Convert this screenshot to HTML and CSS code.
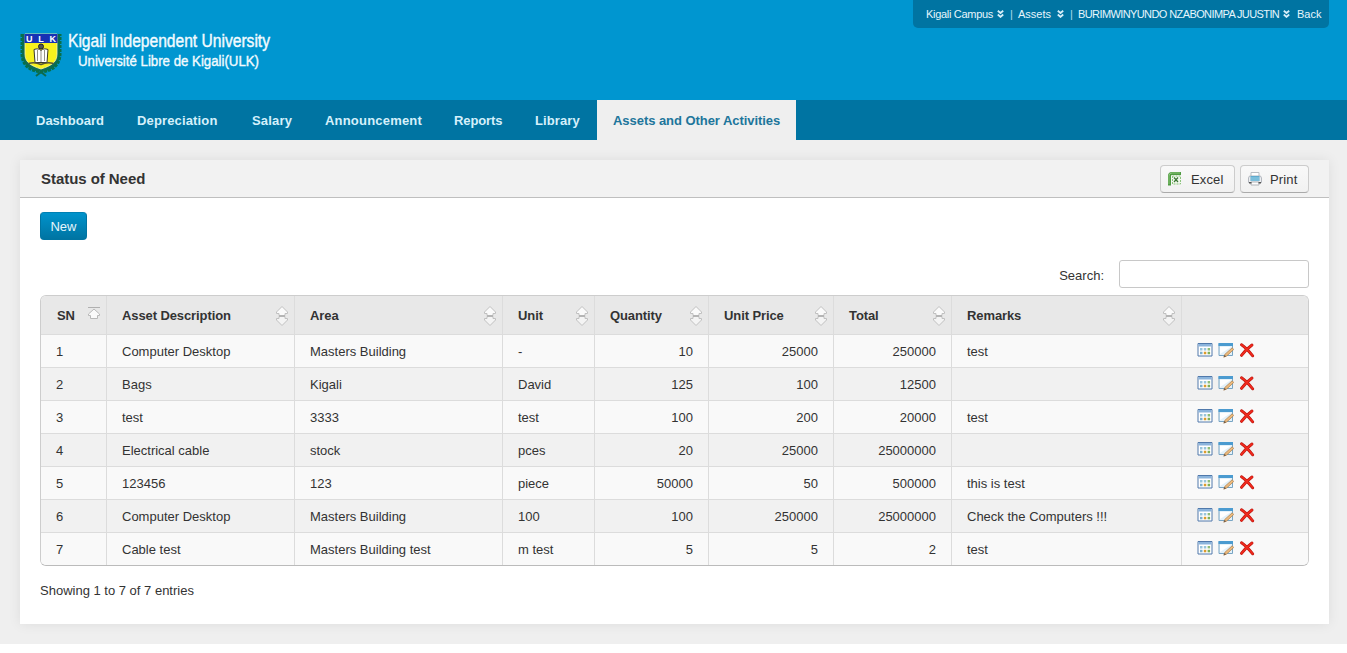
FILE: index.html
```html
<!DOCTYPE html>
<html lang="en">
<head>
<meta charset="utf-8">
<title>Status of Need</title>
<link rel="stylesheet" href="styles.css">
</head>
<body>
<svg class="defs" width="0" height="0" aria-hidden="true">
  <symbol id="chev" viewBox="0 0 7 8"><path d="M.8.7 3.5 3 6.2.7M.8 4.5l2.7 2.4 2.7-2.4" fill="none" stroke="#d5eef9" stroke-width="1.8"/></symbol>
  <symbol id="sort" viewBox="0 0 14 22">
    <path d="M7 1.500 12.500 7v1.500H10v2H4v-2H1.500V7z" fill="#fafafa" stroke="#c0c0c0"/>
    <path d="M7 20.500 1.500 15v-1.500H4v-2h6v2h2.500V15z" fill="#f4f4f4" stroke="#c0c0c0"/>
    <path d="M4 11h6" stroke="#aaa"/>
  </symbol>
  <symbol id="sort-asc" viewBox="0 0 14 14">
    <path d="M1 1.500h12" stroke="#b0b0b0"/>
    <path d="M7 3 12.500 8v1.500H10.500v3h-7v-3h-2V8z" fill="#fafafa" stroke="#b8b8b8"/>
  </symbol>
  <symbol id="cal" viewBox="0 0 16 16">
    <path d="M1 1.500h14v12.500H1z" fill="#fff" stroke="#5079ab"/>
    <path d="M1.500 2h13v2.500h-13z" fill="#8bb4dc"/>
    <path d="M3 6h2.500v2.400H3zM6.800 6h2.500v2.400H6.800z" fill="#98c4dc"/>
    <path d="M10.600 6h2.500v2.400h-2.500z" fill="#8fbd78"/>
    <path d="M3 9.800h2.500v2.500H3z" fill="#7baecb"/>
    <path d="M6.800 9.800h2.500v2.500H6.800z" fill="#dc9b2c"/>
    <path d="M10.600 9.800h2.500v2.500h-2.500z" fill="#7eae58"/>
  </symbol>
  <symbol id="edit" viewBox="0 0 16 16">
    <path d="M1 1.500h13.500v12H1z" fill="#e4f1f9" stroke="#78a5c4"/>
    <path d="M.5 1H15v3H.5z" fill="#4b9bd0"/>
    <path d="M2 5h11L2 12z" fill="#fff"/>
    <path d="m14.200 5.800 1.500 1.700-7 6.500-2.900 1.200 1-2.800z" fill="#edba7c" stroke="#a77b49" stroke-width=".7"/>
    <path d="m6.600 12.900 1.500 1.400-2.400.9z" fill="#665345"/>
  </symbol>
  <symbol id="del" viewBox="0 0 16 16">
    <path d="M2.500 2.800c3 2 7.500 6.500 11.200 11M13 3C9.500 5.500 5 10 2.500 13.400" fill="none" stroke="#b8140b" stroke-width="2.900" stroke-linecap="round"/>
    <path d="M2.500 2.800c3 2 7.500 6.500 11.200 11M13 3C9.500 5.500 5 10 2.500 13.400" fill="none" stroke="#f02a1e" stroke-width="1.800" stroke-linecap="round"/>
  </symbol>
</svg>
<div class="page">
  <header class="header">
    <svg class="logo" width="260" height="52" viewBox="0 0 260 52">
      <path d="M3 4v20c0 11 8 17 19 18 11-1 19-7 19-18V4" fill="#0e6b57" stroke="#087049" stroke-width="3" stroke-dasharray="3 1"/>
      <path d="m17 46 5-4 5 4" fill="none" stroke="#0d6a4c" stroke-width="2"/>
      <path d="M6 4h32v20c0 9-7 12-16 15C13 36 6 33 6 24z" fill="#f7f21d" stroke="#fff8a8" stroke-width=".8"/>
      <path d="M5.500 4h33v9h-33z" fill="#1731b4"/>
      <text class="crest" x="7" y="11.500" textLength="30">ULK</text>
      <path d="M15 19.500c3-1 5-1 7 1 2-2 4-2 7-1l-1 13H16z" fill="#fff" stroke="#38382e"/>
      <path d="M22 20v12M18.500 20v11M25.500 20v11" stroke="#77756a" stroke-width=".8"/>
      <circle cx="22" cy="16.500" r="2.500" fill="#555" stroke="#222"/>
      <path d="M9.500 33.500q6-2 12.500 1 6-3 12.500-1" fill="none" stroke="#56543c" stroke-width="1.500"/>
      <text class="wordmark first" x="49" y="16.500" textLength="202" lengthAdjust="spacingAndGlyphs">Kigali Independent University</text>
      <text class="wordmark second" x="59" y="36" textLength="181" lengthAdjust="spacingAndGlyphs">Université Libre de Kigali(ULK)</text>
    </svg>
    <div class="user-bar">
      <span class="campus">Kigali Campus</span><svg class="chev"><use href="#chev"/></svg><i>|</i>
      <span class="module">Assets</span><svg class="chev"><use href="#chev"/></svg><i>|</i>
      <span class="user">BURIMWINYUNDO NZABONIMPA JUUSTIN</span><svg class="chev"><use href="#chev"/></svg>
      <span class="back">Back</span>
    </div>
  </header>
  <nav class="nav">
    <a class="n-dash">Dashboard</a><a class="n-dep">Depreciation</a><a class="n-sal">Salary</a><a class="n-ann">Announcement</a><a class="n-rep">Reports</a><a class="n-lib">Library</a><a class="active">Assets and Other Activities</a>
  </nav>
  <main class="panel">
    <div class="panel-head">
      <h1>Status of Need</h1>
      <button class="tool excel"><svg width="16" height="16" viewBox="0 0 16 16"><path d="M2.500 14.500V5Q2.500 2.500 5 2.500h9" fill="none" stroke="#4f9a42" stroke-width="3"/><path d="M2 13V5Q2 2 5 2h8" fill="none" stroke="#9bd088" stroke-width=".8"/><path d="M5.500 5h8v8h-8z" fill="#f0f7ec" stroke="#8cc47c" stroke-dasharray="2 1"/><path d="m7 6.500 4 4.500M11 6.500l-4 4.500" stroke="#3a7433" stroke-width="1.200"/></svg><span>Excel</span></button>
      <button class="tool print"><svg width="16" height="16" viewBox="0 0 16 16"><path d="M4 1.500h8v4H4z" fill="#fff" stroke="#b9bdc2"/><path d="M2.500 5h11l1 2v4.500h-13V7z" fill="#eceef1" stroke="#b4b8bf"/><path d="M3.500 5h9v5h-9z" fill="#5faace"/><path d="M4 7h8M4 9h8" stroke="#97d3e9"/><path d="M4 11h8v3H4z" fill="#fff" stroke="#b0b3b8"/><path d="M2 11.800h2.500M11.500 11.800H14" stroke="#555" stroke-width="1.500"/></svg><span>Print</span></button>
    </div>
    <div class="panel-body">
      <button class="new">New</button>
      <label class="search"><span>Search:</span><input type="text"></label>
      <table class="grid">
        <colgroup><col class="c-sn"><col class="c-desc"><col class="c-area"><col class="c-unit"><col class="c-qty"><col class="c-price"><col class="c-total"><col class="c-rem"><col class="c-act"></colgroup>
        <thead><tr>
          <th><div>SN<svg class="asc"><use href="#sort-asc"/></svg></div></th>
          <th><div>Asset Description<svg class="sort"><use href="#sort"/></svg></div></th>
          <th><div>Area<svg class="sort"><use href="#sort"/></svg></div></th>
          <th><div>Unit<svg class="sort"><use href="#sort"/></svg></div></th>
          <th><div>Quantity<svg class="sort"><use href="#sort"/></svg></div></th>
          <th><div>Unit Price<svg class="sort"><use href="#sort"/></svg></div></th>
          <th><div>Total<svg class="sort"><use href="#sort"/></svg></div></th>
          <th><div>Remarks<svg class="sort"><use href="#sort"/></svg></div></th>
          <th></th>
        </tr></thead>
        <tbody>
          <tr><td>1</td><td>Computer Desktop</td><td>Masters Building</td><td>-</td><td class="num">10</td><td class="num">25000</td><td class="num">250000</td><td>test</td><td><div class="acts"><svg><use href="#cal"/></svg><svg><use href="#edit"/></svg><svg><use href="#del"/></svg></div></td></tr>
          <tr><td>2</td><td>Bags</td><td>Kigali</td><td>David</td><td class="num">125</td><td class="num">100</td><td class="num">12500</td><td></td><td><div class="acts"><svg><use href="#cal"/></svg><svg><use href="#edit"/></svg><svg><use href="#del"/></svg></div></td></tr>
          <tr><td>3</td><td>test</td><td>3333</td><td>test</td><td class="num">100</td><td class="num">200</td><td class="num">20000</td><td>test</td><td><div class="acts"><svg><use href="#cal"/></svg><svg><use href="#edit"/></svg><svg><use href="#del"/></svg></div></td></tr>
          <tr><td>4</td><td>Electrical cable</td><td>stock</td><td>pces</td><td class="num">20</td><td class="num">25000</td><td class="num">25000000</td><td></td><td><div class="acts"><svg><use href="#cal"/></svg><svg><use href="#edit"/></svg><svg><use href="#del"/></svg></div></td></tr>
          <tr><td>5</td><td>123456</td><td>123</td><td>piece</td><td class="num">50000</td><td class="num">50</td><td class="num">500000</td><td>this is test</td><td><div class="acts"><svg><use href="#cal"/></svg><svg><use href="#edit"/></svg><svg><use href="#del"/></svg></div></td></tr>
          <tr><td>6</td><td>Computer Desktop</td><td>Masters Building</td><td>100</td><td class="num">100</td><td class="num">250000</td><td class="num">25000000</td><td>Check the Computers !!!</td><td><div class="acts"><svg><use href="#cal"/></svg><svg><use href="#edit"/></svg><svg><use href="#del"/></svg></div></td></tr>
          <tr><td>7</td><td>Cable test</td><td>Masters Building test</td><td>m test</td><td class="num">5</td><td class="num">5</td><td class="num">2</td><td>test</td><td><div class="acts"><svg><use href="#cal"/></svg><svg><use href="#edit"/></svg><svg><use href="#del"/></svg></div></td></tr>
        </tbody>
      </table>
      <p class="info">Showing 1 to 7 of 7 entries</p>
    </div>
  </main>
</div>
</body>
</html>
```

FILE: styles.css
```css
* { box-sizing: border-box; }
html, body { height: 100%; overflow: hidden; }
body { margin: 0; background: #fff; color: #333; font: 13px/18px "Liberation Sans", Arial, sans-serif; }
.defs { display: block; }
.page { height: 644px; background: #efefef; }
.header { height: 100px; background: #0096d0; display: flex; justify-content: space-between; align-items: flex-start; padding: 0 18px 0 19px; }
.logo { margin-top: 30px; overflow: visible; }
.wordmark { fill: #f2fbff; font-family: "Liberation Sans Narrow", "Liberation Sans", Arial, sans-serif; stroke: #f2fbff; stroke-width: .4px; }
.first { font-size: 17.5px; }
.second { font-size: 15.5px; }
.crest { fill: #fff; font: 700 9px "Liberation Sans", Arial, sans-serif; }
.user-bar { width: 416px; height: 28px; background: #0074a2; border-radius: 0 0 5px 5px; color: #e6f6fd; font-size: 11px; line-height: 28px; padding-left: 13px; display: flex; align-items: center; white-space: nowrap; }
.user-bar i { font-style: normal; width: 3px; margin: 0 5px 0 6px; color: #a9d8ec; }
.campus { width: 67px; letter-spacing: -.3px; }
.module { width: 35px; }
.user { width: 201px; letter-spacing: -.6px; }
.back { margin-left: 7px; }
.chev { width: 7px; height: 8px; margin-left: 4px; flex: none; }
.nav { height: 40px; background: #0074a2; padding-left: 20px; display: flex; }
.nav a { padding-left: 16px; line-height: 41px; font-weight: 700; color: #d5f0fb; white-space: nowrap; }
.n-dash { width: 101px; }
.n-dep { width: 115px; letter-spacing: .15px; }
.n-sal { width: 73px; letter-spacing: .2px; }
.n-ann { width: 129px; letter-spacing: .2px; }
.n-rep { width: 81px; letter-spacing: -.1px; }
.n-lib { width: 78px; letter-spacing: .1px; }
.nav .active { width: 199px; background: #efefef; color: #20759b; letter-spacing: -.05px; }
.panel { margin: 20px 18px 0 20px; height: 464px; background: #fff; box-shadow: 0 0 12px rgba(0,0,0,.08); }
.panel-head { height: 38px; background: #f2f2f2; border-bottom: 1px solid #bfbfbf; display: flex; align-items: center; padding: 0 20px 0 21px; gap: 5px; }
h1 { margin: 0 auto 0 0; font-size: 15px; line-height: 18px; letter-spacing: -.05px; }
.tool { height: 28px; margin: 0; padding: 0; border: 1px solid #ccc; border-bottom-color: #aaa; border-radius: 4px; background: linear-gradient(#f9f9f9, #f1f1f1); font: 13px "Liberation Sans", Arial, sans-serif; color: #333; display: flex; align-items: center; }
.tool span { padding-top: 2px; letter-spacing: .15px; }
.excel { width: 75px; padding-left: 6px; gap: 8px; }
.print { width: 69px; padding-left: 6px; gap: 7px; }
.panel-body { padding: 14px 20px 0; }
.new { display: block; width: 47px; height: 28px; padding: 0; border: 1px solid #0074a2; border-top-color: #0080b3; border-radius: 4px; background: linear-gradient(#0093cc, #0074a2); color: #e6f6fd; font: 13px "Liberation Sans", Arial, sans-serif; }
.search { display: flex; justify-content: flex-end; align-items: center; gap: 15px; margin-top: 20px; }
.search span { padding-top: 3px; }
.search input { width: 190px; height: 28px; border: 1px solid #c8c8c8; border-radius: 3px; background: #fff; padding: 0 6px; }
.grid { width: 1269px; margin-top: 7px; table-layout: fixed; border-collapse: separate; border-spacing: 0; border: 1px solid #cdcdcd; border-bottom-color: #bbb; border-radius: 6px; overflow: hidden; }
.c-sn { width: 66px; }
.c-desc { width: 188px; }
.c-area { width: 208px; }
.c-unit { width: 92px; }
.c-qty { width: 114px; }
.c-price { width: 125px; }
.c-total { width: 118px; }
.c-rem { width: 230px; }
.c-act { width: 126px; }
th, td { padding: 2px 15px 0; border-right: 1px solid #dcdcdc; border-bottom: 1px solid #dcdcdc; text-align: left; white-space: nowrap; }
th:last-child, td:last-child { border-right: 0; }
th { height: 39px; background: #e8e8e8; padding-right: 5px; letter-spacing: -.1px; }
th div { height: 22px; display: flex; justify-content: space-between; align-items: center; }
td { height: 33px; background: #f9f9f9; }
th:first-child { padding-left: 16px; }
tr:nth-child(even) td { background: #f1f1f1; }
tbody tr:last-child td { height: 32px; border-bottom: 0; }
.num { text-align: right; }
.sort { width: 14px; height: 22px; }
.asc { width: 14px; height: 14px; margin-bottom: 7px; }
.acts { display: flex; gap: 5px; margin-top: -5px; }
.acts svg { width: 16px; height: 16px; display: block; }
.info { margin: 16px 0 0; }
```
